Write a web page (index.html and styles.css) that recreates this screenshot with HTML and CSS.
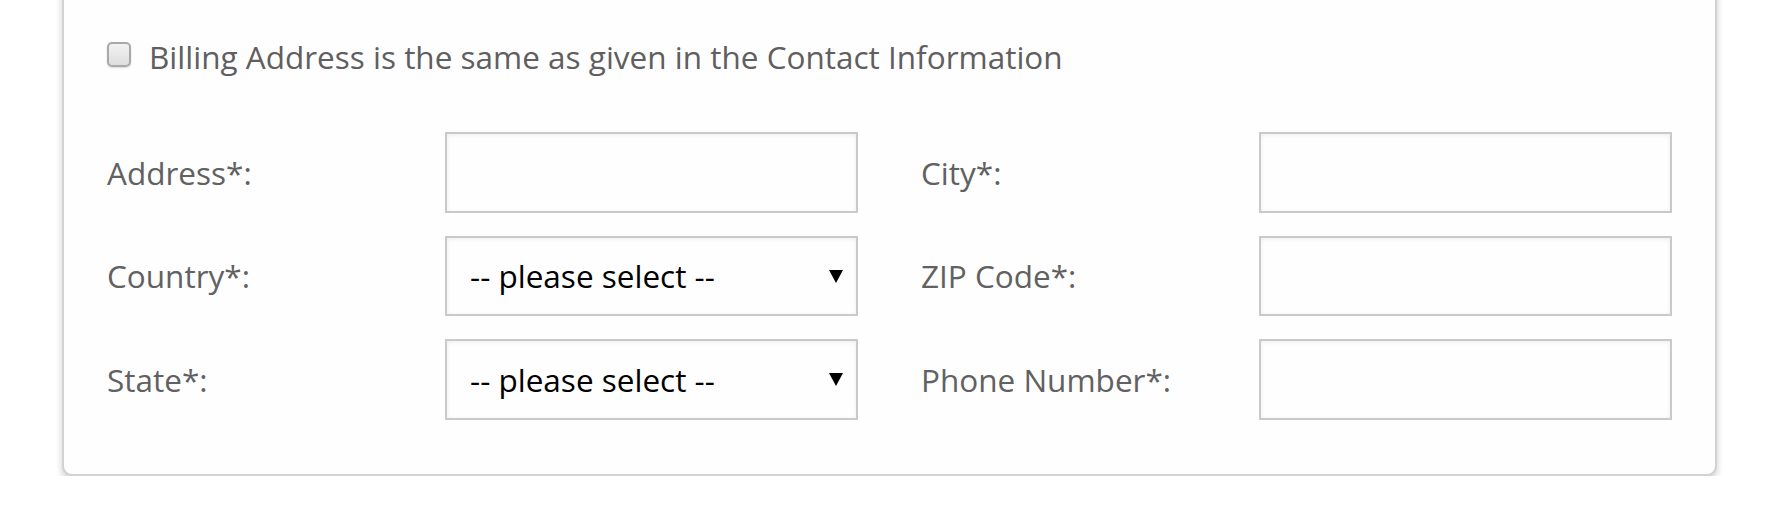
FILE: index.html
```html
<!DOCTYPE html>
<html lang="en">
<head>
<meta charset="utf-8">
<title>Billing Address</title>
<link rel="stylesheet" href="styles.css">
</head>
<body>
<div class="card">
  <label class="same-row">
    <input type="checkbox" class="check">
    <span>Billing Address is the same as given in the Contact Information</span>
  </label>
  <div class="form-grid">
    <div class="field">
      <label class="field-label" for="addr">Address*:</label>
      <input class="text-input" id="addr" type="text">
    </div>
    <div class="field">
      <label class="field-label" for="city">City*:</label>
      <input class="text-input" id="city" type="text">
    </div>
    <div class="field">
      <label class="field-label" for="country">Country*:</label>
      <div class="select-wrap">
        <select class="select-input" id="country"><option>-- please select --</option></select>
        <svg class="arrow" width="14" height="13" viewBox="0 0 14 13"><path d="M0 0H14L7 13Z" fill="#000"/></svg>
      </div>
    </div>
    <div class="field">
      <label class="field-label" for="zip">ZIP Code*:</label>
      <input class="text-input" id="zip" type="text">
    </div>
    <div class="field">
      <label class="field-label" for="state">State*:</label>
      <div class="select-wrap">
        <select class="select-input" id="state"><option>-- please select --</option></select>
        <svg class="arrow" width="14" height="13" viewBox="0 0 14 13"><path d="M0 0H14L7 13Z" fill="#000"/></svg>
      </div>
    </div>
    <div class="field">
      <label class="field-label" for="phone">Phone Number*:</label>
      <input class="text-input" id="phone" type="text">
    </div>
  </div>
</div>
</body>
</html>
```
FILE: styles.css
```css
* { box-sizing: border-box; }
html, body { margin: 0; padding: 0; background: #ffffff; }
body {
  font-family: "Open Sans", "Noto Sans", "Liberation Sans", sans-serif;
  color: #606060;
  overflow: hidden;
}
.card {
  margin: -20px 0 0 62px;
  width: 1655px;
  background: #fefefe;
  border: 2px solid #d2d2d2;
  border-radius: 10px;
  box-shadow: 0 4px 7px rgba(0, 0, 0, 0.2);
  padding: 54px 43px 54px 43px;
}
.same-row {
  display: flex;
  align-items: center;
  gap: 18px;
  height: 40px;
  margin-bottom: 56px;
  font-size: 31.5px;
  color: #5f5f5f;
}
.check {
  appearance: none;
  -webkit-appearance: none;
  margin: 0;
  width: 24px;
  height: 25px;
  border: 2px solid #a9a9a9;
  border-radius: 5px;
  background: linear-gradient(#f2f2f2, #dedede);
  box-shadow: 0 1px 2px rgba(0, 0, 0, 0.15);
  flex: none;
  position: relative;
  top: -2px;
}
.form-grid {
  display: grid;
  grid-template-columns: 1fr 1fr;
  column-gap: 63px;
  row-gap: 23px;
}
.field {
  display: grid;
  grid-template-columns: 338px 1fr;
  align-items: center;
}
.field-label {
  font-size: 31.5px;
  color: #616161;
}
.text-input, .select-input {
  width: 100%;
  height: 80.5px;
  margin: 0;
  border: 2px solid #c9c9c9;
  border-radius: 0;
  background: #fefefe;
  box-shadow: inset 0 1px 4px rgba(0, 0, 0, 0.07);
  font-family: inherit;
  outline: none;
}
.select-wrap {
  position: relative;
}
.select-input {
  appearance: none;
  -webkit-appearance: none;
  padding: 0 40px 0 23px;
  font-size: 31.5px;
  color: #000;
}
.arrow {
  position: absolute;
  right: 15px;
  top: 34px;
  pointer-events: none;
}
```
